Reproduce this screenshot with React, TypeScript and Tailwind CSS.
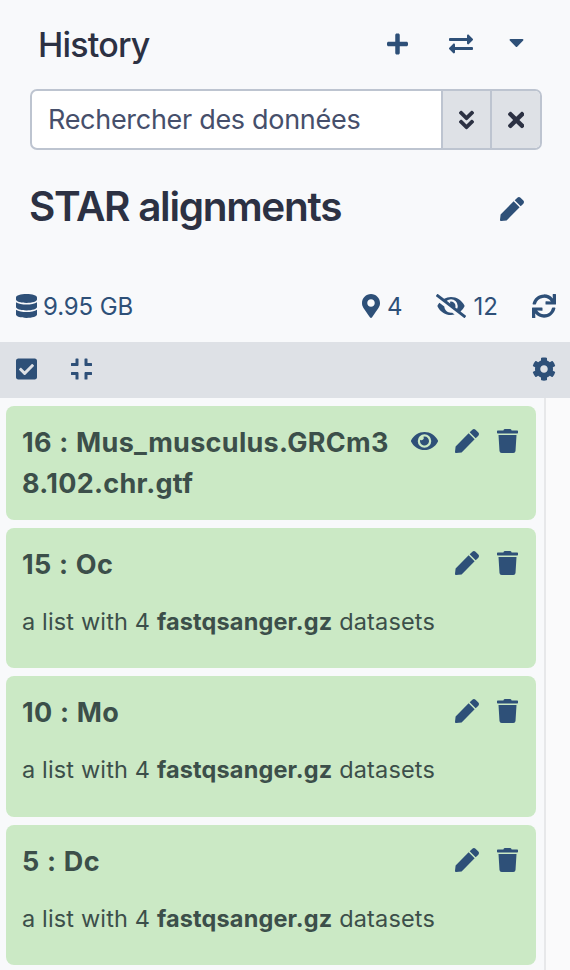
import {
  FaAngleDoubleDown, FaCaretDown, FaCheckSquare, FaCog, FaCompress, FaDatabase, FaExchangeAlt,
  FaEye, FaEyeSlash, FaMapMarkerAlt, FaPen, FaPlus, FaSync, FaTimes, FaTrash,
} from "react-icons/fa";

type Item = { id: number; name: string; dataset?: boolean; height: string };

const items: Item[] = [
  { id: 16, name: "Mus_musculus.GRCm38.102.chr.gtf", dataset: true, height: "h-[114px]" },
  { id: 15, name: "Oc", height: "h-[140px]" },
  { id: 10, name: "Mo", height: "h-[141px]" },
  { id: 5, name: "Dc", height: "h-[140px]" },
];

function HistoryItem({ item }: { item: Item }) {
  return (
    <article className={`${item.height} shrink-0 rounded-lg bg-[#cbe9c5] pl-4 pr-[18px] pt-4 text-[#3c4f4a]`}>
      <div className="flex items-start">
        <h3 className="w-[372px] break-all text-[27px] font-bold leading-[41px] tracking-[0.3px] [word-spacing:0.8px]">
          {`${item.id} : ${item.name}`}
        </h3>
        <div className="ml-auto flex shrink-0 items-center pt-[7px] text-[24px] text-[#2e5078]">
          {item.dataset && <FaEye className="mr-[17px] h-6 w-[27px]" />}
          <FaPen className="mr-[18px] h-6 w-6" />
          <FaTrash className="h-6 w-[21px]" />
        </div>
      </div>
      {!item.dataset && (
        <p className="mt-[18px] whitespace-nowrap text-[23.5px] leading-[37px] tracking-[0.15px]">
          a list with 4 <b className="font-bold">fastqsanger.gz</b> datasets
        </p>
      )}
    </article>
  );
}

export default function App() {
  return (
    <main className="flex h-[970px] w-[570px] flex-col overflow-hidden bg-[#f8f9fb] font-['Inter',sans-serif] text-[#2c3143]">
      <header className="flex h-[89px] shrink-0 items-center pl-[38px] pr-[46px]">
        <h1 className="pt-px text-[34px] font-[550] leading-[42px] tracking-[-0.8px]">History</h1>
        <nav className="ml-auto flex items-center pb-[2px] text-[#2e5078]">
          <FaPlus className="mr-[41px] h-6 w-[21px]" />
          <FaExchangeAlt className="mr-[36px] h-6 w-6" />
          <FaCaretDown className="mb-[3px] h-6 w-[15px]" />
        </nav>
      </header>
      <div className="ml-[30px] flex h-[61px] w-[512px] shrink-0 overflow-hidden rounded-[7px] border-2 border-[#bdc4d0] bg-white">
        <div className="flex flex-1 items-center pl-4 pt-[2px] text-[27px] tracking-[-0.3px] text-[#464f6b]">Rechercher des données</div>
        <button className="flex w-[49px] items-center justify-center border-l-2 border-[#bdc4d0] bg-[#dee1e6]">
          <FaAngleDoubleDown className="h-6 w-[15px]" />
        </button>
        <button className="flex w-[50px] items-center justify-center border-l-2 border-[#bdc4d0] bg-[#dee1e6]">
          <FaTimes className="h-6 w-[16.5px]" />
        </button>
      </div>
      <section className="flex h-[114px] shrink-0 items-center pl-[29px] pr-[46px]">
        <h2 className="whitespace-nowrap text-[40.5px] font-[580] leading-[50px] tracking-[-1.3px]">STAR alignments</h2>
        <FaPen className="ml-auto mt-1 h-6 w-6 text-[#2e5078]" />
      </section>
      <section className="flex h-[78px] shrink-0 items-center pl-4 pr-[14px] pt-[6px] text-[24px] text-[#2e5078]">
        <FaDatabase className="mr-[6px] h-6 w-[21px]" />
        <span className="pt-[2px] tracking-[-0.1px]">9.95 GB</span>
        <FaMapMarkerAlt className="ml-auto mr-[7px] h-6 w-[18px]" />
        <span className="pt-[2px]">4</span>
        <FaEyeSlash className="ml-[33px] mr-[8px] h-6 w-[30px]" />
        <span className="pt-[2px]">12</span>
        <FaSync className="ml-[34px] h-6 w-6" />
      </section>
      <div className="flex h-14 shrink-0 items-center bg-[#dee1e6] pb-[2px] pl-4 pr-[14px] text-[#2e5078]">
        <FaCheckSquare className="mr-[34px] h-6 w-[21px]" />
        <FaCompress className="h-6 w-[21px]" />
        <FaCog className="ml-auto h-6 w-6" />
      </div>
      <div className="flex min-h-0 flex-1">
        <div className="flex w-[544px] flex-col gap-2 pl-[6px] pr-2 pt-2">
          {items.map((item) => <HistoryItem key={item.id} item={item} />)}
        </div>
        <div className="flex-1 border-l-2 border-[#e7e8ea] bg-[#fafafb]" />
      </div>
    </main>
  );
}
